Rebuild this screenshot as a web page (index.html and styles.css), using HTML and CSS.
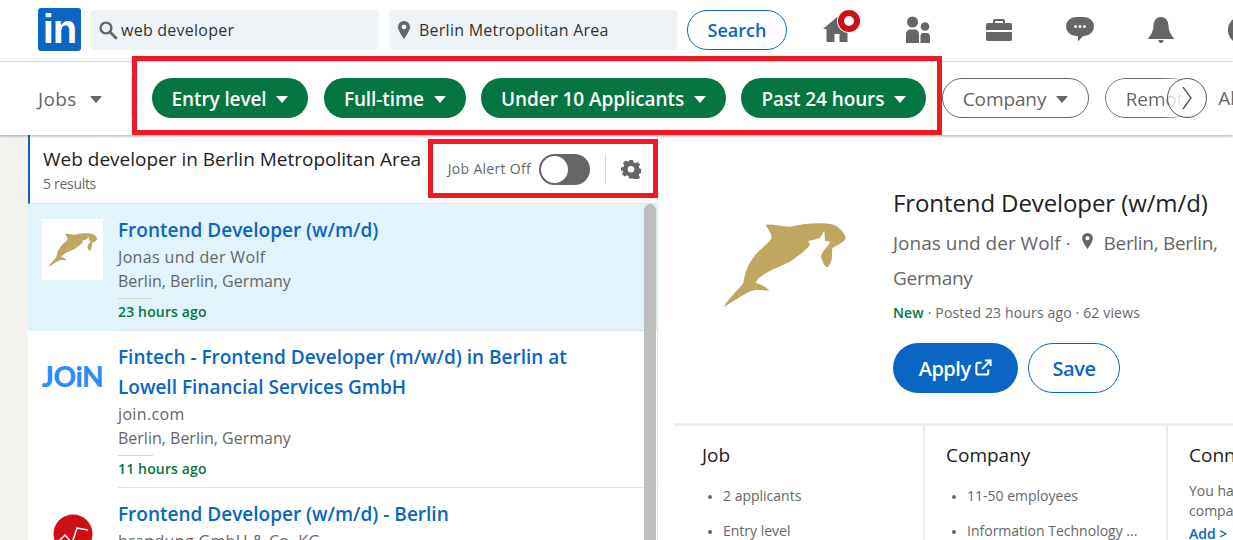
FILE: index.html
```html
<!doctype html>
<html lang="en">
	<head>
		<meta charset="utf-8" />
		<title>Jobs search</title>
		<link rel="stylesheet" href="styles.css">
	</head>

	<body>
		<!-- Top nav -->
		<header class="topbar">
			<div class="logo"><span>in</span></div>
			<div class="search-box search-keyword">
				<svg class="search-icon" viewBox="0 0 20 20" width="20" height="20"><circle cx="8" cy="8" r="5.4" fill="none" stroke="#666" stroke-width="2.4"/><path d="M12 12l6 6" stroke="#666" stroke-width="2.8" stroke-linecap="round"/></svg>
				<span>web developer</span>
			</div>
			<div class="search-box search-place">
				<svg viewBox="0 0 14 20" width="14" height="20"><path fill="#666" fill-rule="evenodd" d="M7 1a6 6 0 0 0-6 6c0 4 6 12 6 12s6-8 6-12a6 6 0 0 0-6-6zm0 8.2A2.3 2.3 0 1 1 7 4.6a2.3 2.3 0 0 1 0 4.6z"/></svg>
				<span>Berlin Metropolitan Area</span>
			</div>
			<button class="btn-search">Search</button>
			<nav class="nav-icons">
				<div class="nav-item nav-home">
					<svg viewBox="0 0 28 25" width="28" height="25"><path fill="#666" d="M14 0L0 12h3.500v13h8v-8h5v8h8V12H28l-5-4.300V2h-4v2.200z"/></svg>
					<span class="nav-badge"></span>
				</div>
				<div class="nav-item">
					<svg viewBox="0 0 26 28" width="26" height="28"><g fill="#666"><circle cx="7.500" cy="6" r="5.500"/><path d="M1 27V18a4.500 4.500 0 0 1 4.500-4.500h4A4.500 4.500 0 0 1 14 18v9z"/><circle cx="20" cy="10.500" r="4.300"/><path d="M15.500 27v-7a3 3 0 0 1 3-3h3a3.500 3.500 0 0 1 3.500 3.500V27z"/></g></svg>
				</div>
				<div class="nav-item">
					<svg viewBox="0 0 26 24" width="26" height="24"><path fill="#666" d="M9 1h8a2 2 0 0 1 2 2v2h5a2 2 0 0 1 2 2v5H0V7a2 2 0 0 1 2-2h5V3a2 2 0 0 1 2-2zm0 2v2h8V3zM0 14h26v7a2 2 0 0 1-2 2H2a2 2 0 0 1-2-2z"/></svg>
				</div>
				<div class="nav-item">
					<svg viewBox="0 0 28 25" width="28" height="25"><path fill="#666" d="M10 0h8a10 9.500 0 0 1 0 19h-1l-5 5.500V19h-2a10 9.500 0 0 1 0-19z"/><g fill="#fff"><circle cx="9.500" cy="9.500" r="1.500"/><circle cx="14" cy="9.500" r="1.500"/><circle cx="18.500" cy="9.500" r="1.500"/></g></svg>
				</div>
				<div class="nav-item">
					<svg viewBox="0 0 26 26" width="26" height="26"><path fill="#666" d="M13 0c5 0 7.500 4 7.500 9 0 5 2.500 9 5.500 12.500v.5H0v-.5C3 18 5.500 14 5.500 9 5.500 4 8 0 13 0zM10.500 23h5a2.500 3 0 0 1-5 0z"/></svg>
				</div>
				<div class="nav-item nav-me"></div>
			</nav>
		</header>

		<!-- Filter pills -->
		<div class="filterbar">
			<div class="filter-jobs">Jobs <span class="caret caret-grey"></span></div>
			<div class="pill pill-on">Entry level <span class="caret"></span></div>
			<div class="pill pill-on">Full-time <span class="caret"></span></div>
			<div class="pill pill-on">Under 10 Applicants <span class="caret"></span></div>
			<div class="pill pill-on">Past 24 hours <span class="caret"></span></div>
			<div class="pill pill-off">Company <span class="caret caret-grey"></span></div>
			<div class="pill pill-off pill-cut">Remote</div>
			<div class="filter-all">All filters</div>
			<div class="scroll-next">
				<svg viewBox="0 0 12 26" width="12" height="26"><path d="M2 2l8 11-8 11" fill="none" stroke="#555" stroke-width="1.300"/></svg>
			</div>
		</div>

		<main class="content">
			<section class="results">
				<div class="results-head">
					<div class="results-title">
						<h1>Web developer in Berlin Metropolitan Area</h1>
						<p>5 results</p>
					</div>
					<div class="alert">
						<span class="alert-label">Job Alert Off</span>
						<span class="toggle"><span class="knob"></span></span>
						<span class="alert-sep"></span>
						<svg viewBox="0 0 20 20" width="20" height="20"><path fill="#666" fill-rule="evenodd" d="M8 1h4l.6 2.500 1.600.7 2.200-1.300 2.700 2.700-1.300 2.200.7 1.600 2.500.6v4l-2.500.6-.7 1.600 1.300 2.200-2.700 2.700-2.200-1.300-1.600.7L12 19.500H8l-.6-2.500-1.600-.7-2.200 1.300-2.700-2.700 1.300-2.200-.7-1.600L0 12.500v-4l2.500-.6.700-1.600L1.900 4.100l2.700-2.700 2.200 1.300 1.600-.7zM10 7a3.300 3.300 0 1 0 0 6.600A3.300 3.300 0 0 0 10 7z"/></svg>
					</div>
				</div>

				<div class="job-list">
					<article class="job job-active">
						<div class="job-logo logo-white">
							<svg viewBox="0 0 420 300" width="56" height="40"><use href="#dolphin"/></svg>
						</div>
						<div class="job-body">
							<h2>Frontend Developer (w/m/d)</h2>
							<p class="job-company">Jonas und der Wolf</p>
							<p>Berlin, Berlin, Germany</p>
							<div class="job-rule"></div>
							<time>23 hours ago</time>
						</div>
					</article>
					<article class="job">
						<div class="job-logo"><span class="join-logo">JOiN</span></div>
						<div class="job-body">
							<h2>Fintech - Frontend Developer (m/w/d) in Berlin at Lowell Financial Services GmbH</h2>
							<p class="job-company">join.com</p>
							<p>Berlin, Berlin, Germany</p>
							<div class="job-rule"></div>
							<time>11 hours ago</time>
						</div>
					</article>
					<article class="job">
						<div class="job-logo">
							<svg viewBox="0 0 40 40" width="40" height="40"><circle cx="20" cy="20" r="19.500" fill="#cc1016"/><path d="M3 30l9-9 7 8 5-15 11 2" fill="none" stroke="#fff" stroke-width="1.500"/></svg>
						</div>
						<div class="job-body">
							<h2>Frontend Developer (w/m/d) - Berlin</h2>
							<p class="job-company">brandung GmbH &amp; Co. KG</p>
						</div>
					</article>
				</div>
				<div class="scrollbar"></div>
			</section>

			<section class="detail">
				<div class="detail-top">
					<svg class="detail-logo" viewBox="0 0 420 300" width="140" height="100">
						<defs>
							<path id="dolphin" fill="#bfa661" d="M152 30C170 25 195 35 225 35 270 25 320 22 350 28 375 35 392 58 392 70 385 85 365 90 352 100 350 115 355 135 340 155 330 160 320 135 318 125 322 105 340 95 345 80L330 78 328 48 315 68 295 75 280 78 285 90C270 110 245 125 225 140 195 155 160 165 130 190L122 203C135 208 150 212 163 227 145 227 120 220 100 232 75 245 50 262 27 276 40 250 65 230 85 205 90 170 100 145 125 115 140 100 160 85 170 70 170 55 160 45 152 30Z"/>
						</defs>
						<use href="#dolphin"/>
					</svg>
					<div class="detail-info">
						<h2>Frontend Developer (w/m/d)</h2>
						<p class="detail-company">Jonas und der Wolf ·
							<svg viewBox="0 0 14 20" width="13" height="18"><path fill="#666" fill-rule="evenodd" d="M7 1a6 6 0 0 0-6 6c0 4 6 12 6 12s6-8 6-12a6 6 0 0 0-6-6zm0 8.200A2.300 2.300 0 1 1 7 4.600a2.300 2.300 0 0 1 0 4.600z"/></svg>
							<span class="detail-place">Berlin, Berlin, Germany</span></p>
						<p class="detail-meta"><strong>New</strong> · Posted 23 hours ago · 62 views</p>
						<div class="detail-actions">
							<button class="btn-apply">Apply
								<svg viewBox="0 0 18 18" width="17" height="17"><path fill="none" stroke="#fff" stroke-width="2.200" d="M7 4H3a1.500 1.500 0 0 0-1.500 1.500V15A1.500 1.500 0 0 0 3 16.500h9.500A1.500 1.500 0 0 0 14 15v-4M7.500 10.500L16 2M10.500 1.500h6v6"/></svg>
							</button>
							<button class="btn-save">Save</button>
						</div>
					</div>
				</div>

				<div class="detail-cols">
					<div class="col col-job">
						<h3>Job</h3>
						<ul>
							<li>2 applicants</li>
							<li>Entry level</li>
						</ul>
					</div>
					<div class="col col-company">
						<h3>Company</h3>
						<ul>
							<li>11-50 employees</li>
							<li>Information Technology ...</li>
						</ul>
					</div>
					<div class="col col-conn">
						<h3>Connections</h3>
						<p>You have no connections at this company</p>
						<a>Add &gt;</a>
					</div>
				</div>
			</section>
		</main>

		<!-- Red annotations drawn over the page -->
		<div class="mark mark-filters"></div>
		<div class="mark mark-alert"></div>
	</body>
</html>
```

FILE: styles.css
```css
* {
	box-sizing: border-box;
}

html,
body {
	height: 540px;
}

body {
	margin: 0;
	width: 1233px;
	overflow: hidden;
	position: relative;
	background: #fff;
	color: #666;
	font-family: "Open Sans", "Noto Sans", sans-serif;
}

h1,
h2,
h3,
p,
ul {
	margin: 0;
	padding: 0;
	font-weight: 400;
}

button {
	font-family: inherit;
	cursor: pointer;
}

/* top bar */
.topbar {
	display: flex;
	align-items: center;
	height: 62px;
	padding: 0 0 2px 38px;
	border-bottom: 1px solid #e6e6e6;
	overflow: hidden;
}

.logo {
	width: 43px;
	height: 43px;
	flex: none;
	margin-right: 10px;
	background: #0a66c2;
	border-radius: 3px;
	display: flex;
	align-items: flex-end;
	justify-content: center;
	overflow: hidden;
}

.logo span {
	color: #fff;
	font: 700 40px/43px "Liberation Sans", sans-serif;
	letter-spacing: -1px;
}

.search-box {
	display: flex;
	align-items: center;
	flex: none;
	height: 40px;
	margin-right: 10px;
	padding-left: 7px;
	background: #eef3f8;
	border-radius: 4px;
	color: #333;
	font-size: 16px;
	letter-spacing: 0.25px;
}

.search-keyword {
	width: 288px;
	gap: 3px;
}

.search-place {
	width: 288px;
	padding-left: 8px;
	gap: 8px;
}

.btn-search {
	width: 100px;
	height: 40px;
	flex: none;
	background: #fff;
	border: 1px solid #0a66c2;
	border-radius: 20px;
	color: #0a66c2;
	font-size: 18px;
	font-weight: 600;
}

.nav-icons {
	display: flex;
	flex: none;
	margin-left: 9px;
}

.nav-item {
	position: relative;
	width: 81px;
	flex: none;
	display: flex;
	justify-content: center;
	align-items: center;
}

.nav-badge {
	position: absolute;
	top: -6px;
	left: 42px;
	width: 22px;
	height: 22px;
	border-radius: 50%;
	border: 6px solid #cc1016;
	background: #fff;
	box-shadow: 0 0 0 1px #fff;
}

.nav-me {
	width: 28px;
	height: 28px;
	margin-left: 27px;
	border-radius: 50%;
	background: #666;
}

/* filter bar */
.filterbar {
	position: relative;
	display: flex;
	align-items: center;
	gap: 15.500px;
	height: 73px;
	padding: 0 0 1px 38px;
	background: #fff;
	box-shadow: 0 1px 3px rgba(0, 0, 0, 0.35);
	overflow: hidden;
	z-index: 2;
	white-space: nowrap;
}

.filter-jobs {
	width: 94px;
	height: 40px;
	flex: none;
	margin-right: 4px;
	font-size: 19px;
	letter-spacing: 0.4px;
	border-right: 1px solid #e6e6e6;
	line-height: 42px;
}

.filter-jobs .caret {
	margin-left: 8px;
}

.caret {
	display: inline-block;
	margin-left: 5px;
	vertical-align: 3px;
	border-left: 6.500px solid transparent;
	border-right: 6.500px solid transparent;
	border-top: 7px solid #fff;
}

.caret-grey {
	border-top-color: #666;
}

.pill {
	flex: none;
	height: 40px;
	padding: 0 20px;
	border-radius: 20px;
	font-size: 19px;
	font-weight: 600;
	line-height: 42px;
	letter-spacing: -0.1px;
	text-align: center;
}

.pill-on {
	background: #057642;
	color: #fff;
}

.pill-off {
	background: #fff;
	border: 1px solid #666;
	line-height: 40px;
	font-weight: 400;
	color: #666;
}

.pill-cut {
	width: 88px;
	padding-right: 0;
	text-align: left;
	overflow: hidden;
	-webkit-mask-image: linear-gradient(to right, #000 62%, transparent);
	mask-image: linear-gradient(to right, #000 62%, transparent);
}

.filter-all {
	flex: none;
	margin-left: 10px;
	font-size: 19px;
}

.scroll-next {
	position: absolute;
	left: 1167px;
	top: 16px;
	width: 40px;
	height: 40px;
	display: flex;
	align-items: center;
	justify-content: center;
	border: 1px solid #555;
	border-radius: 50%;
	background: rgba(255, 255, 255, 0.6);
}

/* main columns */
.content {
	display: flex;
	height: 405px;
	padding-left: 28px;
	background: linear-gradient(to right, #f3f2ef 28px, #fff 28px);
}

.results {
	position: relative;
	width: 630px;
	flex: none;
	overflow: hidden;
	border-right: 1px solid #e6e6e6;
}

.results-head {
	display: flex;
	justify-content: space-between;
	height: 69px;
	padding: 11px 0 0 13px;
	border-left: 2px solid #0a66c2;
	border-bottom: 1px solid #e6e6e6;
}

.results-title {
	white-space: nowrap;
}

.results-title h1 {
	color: #222;
	font-size: 19px;
	line-height: 27px;
}

.results-title p {
	font-size: 14px;
	line-height: 22px;
	letter-spacing: -0.3px;
}

.alert {
	display: flex;
	align-items: center;
	height: 32px;
	margin: 7px 16px 0 0;
}

.alert-label {
	font-size: 14px;
	letter-spacing: 0.3px;
	margin: -2px 8px 0 0;
}

.toggle {
	width: 51px;
	height: 31px;
	background: #666;
	border-radius: 16px;
	padding: 2px;
}

.knob {
	display: block;
	width: 27px;
	height: 27px;
	border-radius: 50%;
	background: #fff;
}

.alert-sep {
	width: 1px;
	height: 30px;
	margin: 0 15px;
	background: #d9d9d9;
}

.job {
	display: flex;
	padding-left: 14px;
}

.job-active {
	background: #e1f3fb;
}

.job-logo {
	width: 61px;
	height: 61px;
	margin-top: 15px;
	flex: none;
	display: flex;
	align-items: center;
	justify-content: center;
}

.logo-white {
	background: #fff;
}

.join-logo {
	color: #2b8cff;
	font: 900 28px/61px "Lato", sans-serif;
	letter-spacing: -0.5px;
}

.job-body {
	flex: 1;
	min-width: 0;
	margin-left: 15px;
	padding: 11px 76px 5px 0;
	border-bottom: 1px solid #e0e4e8;
}

.job-body h2 {
	color: #0a66c2;
	font-size: 19px;
	font-weight: 600;
	line-height: 30px;
}

.job-body p {
	font-size: 16px;
	line-height: 25px;
	white-space: nowrap;
}

.job-body .job-company {
	letter-spacing: 0.35px;
	margin-bottom: -1px;
}

.job-rule {
	width: 35px;
	height: 1px;
	margin-top: 4px;
	background: #d8d4c8;
}

.job-body time {
	display: block;
	color: #057642;
	font-size: 14px;
	font-weight: 600;
	line-height: 26px;
	letter-spacing: 0.15px;
}

.scrollbar {
	position: absolute;
	left: 616px;
	top: 69px;
	width: 12px;
	height: 340px;
	background: #bdbdbd;
	border-radius: 6px 6px 0 0;
}

/* right column */
.detail {
	flex: 1;
	min-width: 0;
	overflow: hidden;
	padding: 0 0 0 16px;
}

.detail-top {
	display: flex;
	height: 291px;
	border-bottom: 3px solid #ededed;
}

.detail-logo {
	flex: none;
	margin: 80px 0 0 41px;
}

.detail-info {
	margin-left: 38px;
	width: 330px;
	padding-top: 50px;
}

.detail-info h2 {
	color: #222;
	font-size: 24px;
	line-height: 36px;
	letter-spacing: -0.1px;
	white-space: nowrap;
}

.detail-company {
	margin-top: 5px;
	font-size: 19px;
	line-height: 35px;
}

.detail-place {
	letter-spacing: -0.3px;
}

.detail-company svg {
	margin: 0 5px;
	vertical-align: 0;
}

.detail-meta {
	margin-top: 5px;
	font-size: 14px;
	line-height: 24px;
	letter-spacing: 0.15px;
}

.detail-meta strong {
	color: #057642;
	font-weight: 600;
}

.detail-actions {
	display: flex;
	gap: 10px;
	margin-top: 18px;
}

.btn-apply,
.btn-save {
	height: 50px;
	border-radius: 25px;
	font-size: 20px;
	font-weight: 600;
	letter-spacing: -0.5px;
}

.btn-apply {
	width: 125px;
	background: #0a66c2;
	border: none;
	color: #fff;
}

.btn-save {
	width: 92px;
	background: #fff;
	border: 1px solid #0a66c2;
	color: #0a66c2;
}

.detail-cols {
	display: flex;
	height: 120px;
	white-space: nowrap;
}

.col {
	flex: none;
	padding: 15px 0 0 28px;
	border-right: 2px solid #ededed;
}

.col-job {
	width: 251px;
}

.col-company {
	width: 243px;
	padding-left: 21px;
}

.col-conn {
	width: 300px;
	padding-left: 21px;
	border-right: none;
}

.col h3 {
	color: #222;
	font-size: 19px;
	line-height: 28px;
}

.col ul {
	margin-top: 9px;
	padding-left: 21px;
}

.col li {
	font-size: 14px;
	line-height: 35px;
}

.col li::marker {
	font-size: 12px;
}

.col p {
	margin-top: 12px;
	width: 215px;
	font-size: 14px;
	line-height: 20px;
	white-space: normal;
}

.col a {
	display: block;
	margin-top: 3px;
	color: #0a66c2;
	font-size: 14px;
	font-weight: 600;
}

/* annotations */
.mark {
	position: absolute;
	border: 5px solid #ed1c24;
	z-index: 5;
}

.mark-filters {
	left: 132px;
	top: 56px;
	width: 810px;
	height: 79px;
}

.mark-alert {
	left: 428px;
	top: 139px;
	width: 230px;
	height: 59px;
}
```
